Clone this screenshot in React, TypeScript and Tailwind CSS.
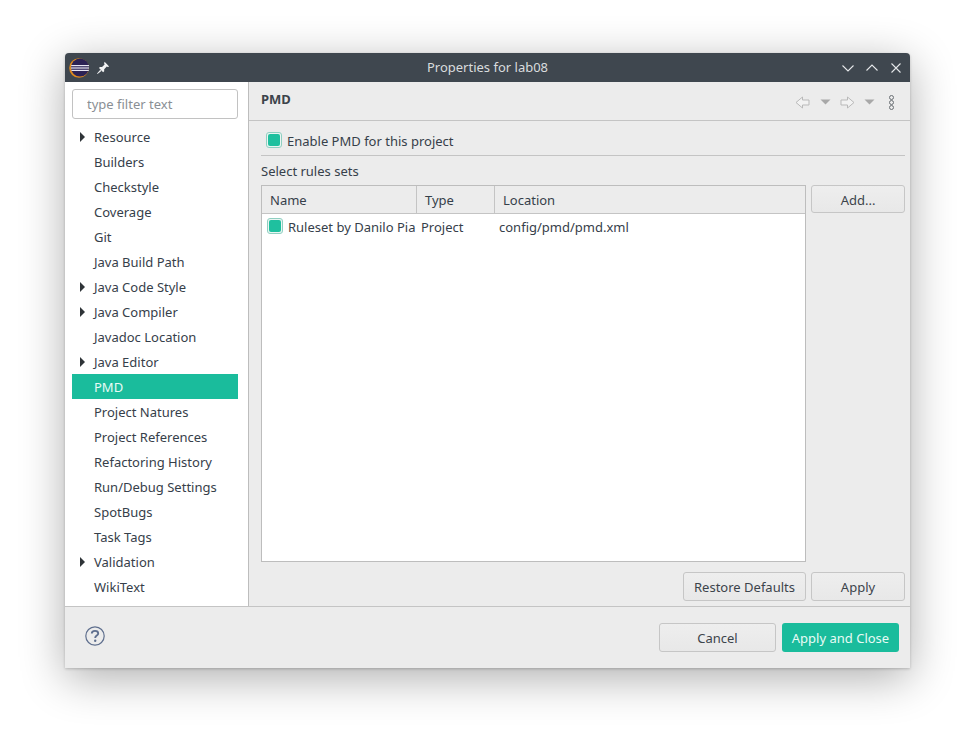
const treeItems = [
  { label: "Resource", arrow: true },
  { label: "Builders" },
  { label: "Checkstyle" },
  { label: "Coverage" },
  { label: "Git" },
  { label: "Java Build Path" },
  { label: "Java Code Style", arrow: true },
  { label: "Java Compiler", arrow: true },
  { label: "Javadoc Location" },
  { label: "Java Editor", arrow: true },
  { label: "PMD", selected: true },
  { label: "Project Natures" },
  { label: "Project References" },
  { label: "Refactoring History" },
  { label: "Run/Debug Settings" },
  { label: "SpotBugs" },
  { label: "Task Tags" },
  { label: "Validation", arrow: true },
  { label: "WikiText" },
];

function EclipseLogo() {
  return (
    <svg width="20" height="20" viewBox="0 0 20 20" className="ml-[1px]">
      <circle cx="10" cy="10" r="9.8" fill="#e08a1e" />
      <circle cx="11" cy="9.6" r="9" fill="#2c2255" />
      <rect x="2.2" y="7" width="17.8" height="1.2" fill="#e8e6f2" />
      <rect x="2" y="9.4" width="18" height="1.2" fill="#e8e6f2" />
      <rect x="2.4" y="11.8" width="17.4" height="1.2" fill="#e8e6f2" />
    </svg>
  );
}

function PinIcon() {
  return (
    <svg width="14" height="14" viewBox="0 0 13 13" fill="#f2f3f4">
      <path d="M8 0.8 12.2 5 11 5.6 10 5.2 7.6 7.6 7.6 9.6 6.6 10.4 2.8 6.6 3.6 5.6 5.6 5.6 8 3.2 7.5 2Z" />
      <path d="M4 8.2 5 9.2 1.4 12 1 11.6Z" />
    </svg>
  );
}

function Check({ className }: { className: string }) {
  return (
    <span className={`flex h-[16px] w-[16px] shrink-0 items-center justify-center rounded-[3px] border border-[#8fcfc1] bg-[#eaf5f2] ${className}`}>
      <span className="h-[12px] w-[12px] rounded-[2px] bg-[#1fc09f]" />
    </span>
  );
}

function NavArrow({ flip }: { flip?: boolean }) {
  return (
    <svg width="15" height="13" viewBox="0 0 15 13" className={flip ? "-scale-x-100" : ""}>
      <path d="M7.5 1 1 6.5 7.5 12V9H14V4H7.5Z" fill="#f2f2f2" stroke="#b9b9b9" strokeWidth="1" />
    </svg>
  );
}

function DropCaret() {
  return (
    <svg width="11" height="6" viewBox="0 0 11 6">
      <path d="M0.5 0.5H10.5L5.5 5.5Z" fill="#a8a8a8" />
    </svg>
  );
}

function Button({ children, className }: { children: string; className: string }) {
  return (
    <button className={`rounded-[3px] border border-[#c6c6c6] bg-gradient-to-b from-[#eeeeee] to-[#e8e8e8] text-[13px] text-[#3c444b] ${className}`}>
      {children}
    </button>
  );
}

export default function App() {
  return (
    <div className="h-[745px] w-[975px] bg-white pl-[65px] pt-[53px] font-['Noto_Sans',sans-serif] text-[13px] text-[#36404a]">
      <div className="flex h-[615px] w-[845px] flex-col overflow-hidden rounded-t-[4px] bg-[#ececec] shadow-[0_10px_45px_rgba(0,0,0,0.32),0_1px_3px_rgba(0,0,0,0.2)]">
        {/* Title bar */}
        <div className="flex h-[29px] shrink-0 items-center bg-[#3f474f] pl-[3px] pr-[8px]">
          <EclipseLogo />
          <span className="ml-[7px]"><PinIcon /></span>
          <div className="flex-1 pl-[23px] text-center text-[13px] text-[#d9dcde]">Properties for lab08</div>
          <div className="flex items-center gap-[12px]">
            <svg width="12" height="12" viewBox="0 0 12 12" fill="none" stroke="#e4e6e8" strokeWidth="1.1">
              <path d="M0.5 3.5 6 9 11.5 3.5" />
            </svg>
            <svg width="12" height="12" viewBox="0 0 12 12" fill="none" stroke="#e4e6e8" strokeWidth="1.1">
              <path d="M0.5 8.5 6 3 11.5 8.5" />
            </svg>
            <svg width="12" height="12" viewBox="0 0 12 12" fill="none" stroke="#e4e6e8" strokeWidth="1.1">
              <path d="M1.5 1.5 10.5 10.5M10.5 1.5 1.5 10.5" />
            </svg>
          </div>
        </div>

        <div className="flex min-h-0 flex-1">
          {/* Left tree */}
          <div className="flex w-[184px] shrink-0 flex-col border-r border-[#bdbdbd] bg-white pl-[7px] pr-[10px] pt-[7px]">
            <input
              placeholder="type filter text"
              className="h-[30px] w-full shrink-0 rounded-[3px] border border-[#c2c2c2] bg-white pl-[14px] text-[13px] outline-none placeholder:text-[#8a8f94]"
            />
            <div className="mt-[5px]">
              {treeItems.map((item) => (
                <div
                  key={item.label}
                  className={`relative flex h-[25px] items-center pl-[22px] pt-[2px] ${item.selected ? "bg-[#1abc9c] text-[#e8fbf6]" : ""}`}
                >
                  {item.arrow && (
                    <span className="absolute left-[8px] top-[8px] h-0 w-0 border-y-[5px] border-l-[5px] border-y-transparent border-l-[#2f3438]" />
                  )}
                  {item.label}
                </div>
              ))}
            </div>
          </div>

          {/* Right panel */}
          <div className="flex min-w-0 flex-1 flex-col">
            <div className="flex h-[39px] shrink-0 items-center border-b border-[#c4c4c4] pl-[12px] pr-[16px]">
              <span className="mb-[2px] font-bold text-[#3c444b]">PMD</span>
              <div className="ml-auto mt-[2px] flex items-center">
                <NavArrow />
                <span className="ml-[10px]"><DropCaret /></span>
                <span className="ml-[9px]"><NavArrow flip /></span>
                <span className="ml-[9px]"><DropCaret /></span>
                <div className="ml-[14px] flex flex-col">
                  <span className="h-[5px] w-[5px] rounded-full border border-[#6a6f74]" />
                  <span className="h-[5px] w-[5px] rounded-full border border-[#6a6f74]" />
                  <span className="h-[5px] w-[5px] rounded-full border border-[#6a6f74]" />
                </div>
              </div>
            </div>

            <div className="flex min-h-0 flex-1 flex-col pl-[12px] pr-[5px]">
              <div className="flex h-[35px] shrink-0 items-center border-b border-[#c4c4c4] pl-[5px] pt-[8px]">
                <Check className="mb-[4px] mr-[5px]" />
                <span>Enable PMD for this project</span>
              </div>
              <div className="flex h-[29px] shrink-0 items-center pt-[2px]">Select rules sets</div>

              <div className="flex min-h-0 flex-1 gap-[5px]">
                <div className="w-[545px] border border-[#bdbdbd] bg-white">
                  <div className="flex h-[28px] border-b border-[#c4c4c4] bg-[#ececec]">
                    <div className="flex w-[155px] items-center border-r border-[#c4c4c4] pl-[8px] pt-[2px]">Name</div>
                    <div className="flex w-[78px] items-center border-r border-[#c4c4c4] pl-[8px] pt-[2px]">Type</div>
                    <div className="flex items-center pl-[8px] pt-[2px]">Location</div>
                  </div>
                  <div className="flex h-[26px] items-center pt-[2px]">
                    <div className="flex w-[155px] items-center overflow-hidden whitespace-nowrap pl-[5px]">
                      <Check className="mb-[4px] mr-[5px]" />
                      <span>Ruleset by Danilo Pia</span>
                    </div>
                    <div className="w-[78px] pl-[4px]">Project</div>
                    <div className="pl-[4px]">config/pmd/pmd.xml</div>
                  </div>
                </div>
                <Button className="h-[28px] w-[94px] pt-[4px]">Add...</Button>
              </div>

              <div className="flex h-[44px] shrink-0 items-start justify-end gap-[5px] pt-[10px]">
                <Button className="h-[29px] w-[123px] pt-[2px]">Restore Defaults</Button>
                <Button className="h-[29px] w-[94px] pt-[2px]">Apply</Button>
              </div>
            </div>
          </div>
        </div>

        {/* Footer */}
        <div className="flex h-[62px] shrink-0 items-center border-t border-[#c4c4c4] pl-[20px] pr-[11px]">
          <svg width="20" height="20" viewBox="0 0 20 20" fill="none" className="mb-[3px]">
            <circle cx="10" cy="10" r="9.2" stroke="#5f6f8e" strokeWidth="1.2" />
            <path d="M6.8 7.6C6.8 5.8 8.2 4.9 10 4.9 11.9 4.9 13.2 5.9 13.2 7.4 13.2 9.6 10.2 9.6 10.2 12" stroke="#5f6f8e" strokeWidth="1.9" />
            <circle cx="10.2" cy="14.8" r="1.2" fill="#5f6f8e" />
          </svg>
          <div className="ml-auto flex gap-[6px]">
            <Button className="h-[29px] w-[117px] pt-[2px]">Cancel</Button>
            <button className="h-[29px] w-[117px] rounded-[3px] bg-[#1abc9c] pt-[2px] text-[13px] text-[#e8fbf6]">Apply and Close</button>
          </div>
        </div>
      </div>
    </div>
  );
}
